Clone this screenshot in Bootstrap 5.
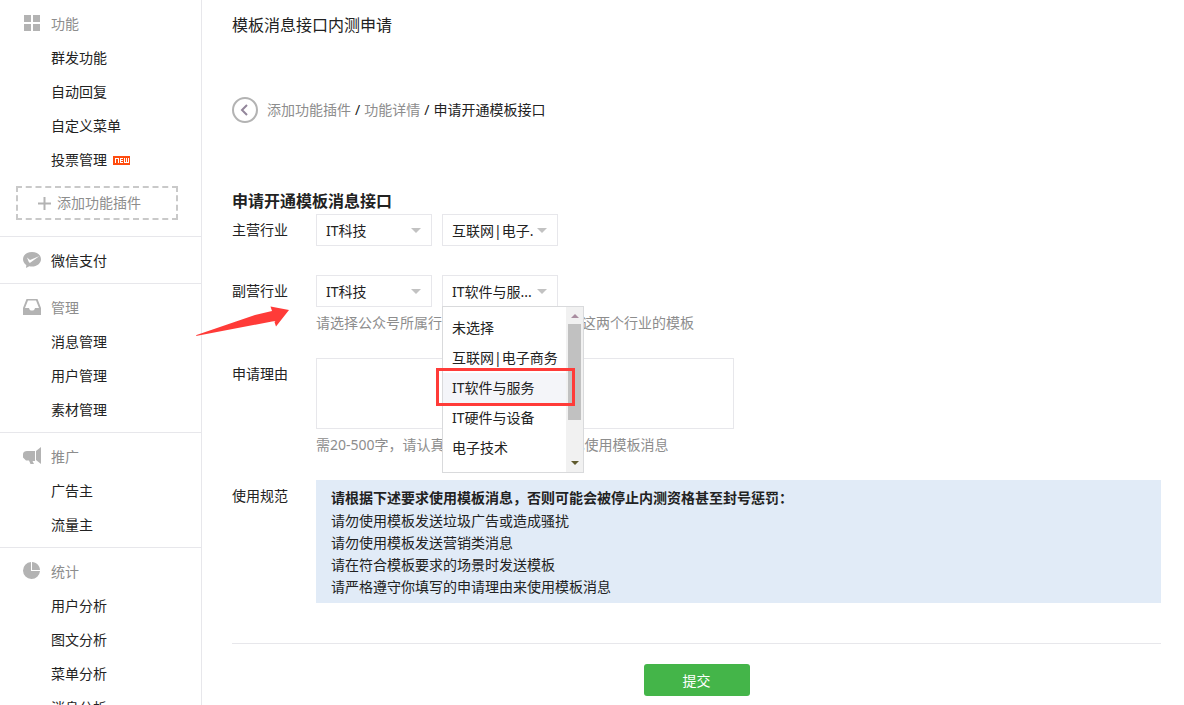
<!DOCTYPE html>
<html lang="zh-CN">
<head>
<meta charset="utf-8">
<meta name="viewport" content="width=device-width, initial-scale=1">
<title>模板消息接口内测申请</title>
<link href="https://cdn.jsdelivr.net/npm/bootstrap@5.3.0/dist/css/bootstrap.min.css" rel="stylesheet">
<style>
body{font-family:"Noto Sans","Noto Sans CJK SC",sans-serif;font-size:14px;line-height:22px;color:#222;background:#fff}
a{color:inherit;text-decoration:none}
.side{width:202px;border-right:1px solid #e7e7eb}
.side-group{padding:7px 0 5px;border-bottom:1px solid #e7e7eb}
.side-group:last-child{border-bottom:0}
.side-row{height:34px;padding-left:51px;display:flex;align-items:center;position:relative}
.side-row svg{position:absolute;left:23px;top:7px}
.muted{color:#8d8d8d}
.new-tag{margin-left:6px;width:17px;height:9px;background:#ff4c0f}
.add-plugin{margin:9px 23px 11px 16px;height:34px;border:2px dashed #c9c9c9;padding-left:20px;gap:6px}
.content-area{padding:9px 23px 9px 30px}
.page-title{font-size:16px;line-height:32px;font-weight:400}
.crumbs{margin-top:56px;gap:9px;height:26px}
.section-title{font-size:16px;line-height:26px;font-weight:700;margin-top:65px}
.field-label{width:84px;line-height:32px}
.form-line{margin-bottom:24px}
.pick-line{margin-bottom:29px}
.picks{gap:10px}
.pick{width:116px;height:32px;border:1px solid #e7e7eb;border-radius:0;padding:2px 20px 0 9px;font-size:14px;line-height:22px;color:#222;box-shadow:none;
background-image:url("data:image/svg+xml,%3Csvg xmlns='http://www.w3.org/2000/svg' viewBox='0 0 10 5'%3E%3Cpath d='M0 0h10L5 5z' fill='%23c2c2c2'/%3E%3C/svg%3E");background-size:10px 5px;background-position:right 10px center}
.hint{margin-top:5px;color:#8d8d8d}
.reason{width:418px;max-width:100%;height:71px;border:1px solid #e7e7eb;border-radius:0;resize:none}
.options{position:absolute;left:0;top:31px;width:142px;height:167px;border:1px solid #d9dadc;background:#fff;z-index:5}
.options ul{padding-top:6px}
.options li{height:30px;padding-left:9px;line-height:30px;white-space:nowrap;position:relative}
.options .chosen{background:#f4f5f9}
.options .chosen::after{content:"";position:absolute;inset:-5px -9px -3px -7px;border:3px solid #ff3b38}
.scroll-track{width:17px;background:#f1f1f1;padding:7px 0}
.scroll-thumb{width:13px;height:96px;background:#c1c1c1;margin:6px 0 auto}
.pointer{position:absolute;left:-36px;top:31px}
.rules{background:#e1ebf7;padding:7px 15px 5px}
.rules strong{margin-bottom:1px}
.divide{border-top:1px solid #e7e7eb;margin-top:40px;padding-top:20px}
.submit{width:106px;height:32px;padding:2px 0 0;font-size:14px;line-height:22px;color:#fff;background:#44b549;border:0;border-radius:3px}
.submit:hover{background:#2f9833;color:#fff}
</style>
</head>
<body>
<div class="d-flex min-vh-100">
<nav class="side flex-shrink-0">
  <div class="side-group">
    <div class="side-row muted"><svg width="18" height="18" fill="#b3b3b3"><path d="M1 1h7v7H1zM10 1h7v7h-7zM1 10h7v7H1zM10 10h7v7h-7z"/></svg>功能</div>
    <a class="side-row" href="#">群发功能</a>
    <a class="side-row" href="#">自动回复</a>
    <a class="side-row" href="#">自定义菜单</a>
    <a class="side-row" href="#">投票管理<span class="new-tag d-block"><svg class="position-static d-block" width="17" height="9" fill="#fff" shape-rendering="crispEdges"><path d="M2 2h4v5H5V3H3v4H2zM7 2h3v1H8v1h2v1H8v1h2v1H7zM11 2h1v4h1V2h1v4h1V2h1v5h-5z"/></svg></span></a>
    <a class="add-plugin d-flex align-items-center muted" href="#"><svg width="13" height="13" fill="#b3b3b3"><path d="M5.500 0h2v5.500H13v2H7.500V13h-2V7.500H0v-2h5.500z"/></svg>添加功能插件</a>
  </div>
  <div class="side-group">
    <a class="side-row" href="#"><svg width="18" height="18"><path d="M9 1C4 1 0 4 0 8.200c0 2.500 1.400 4.500 3.300 5.800L3 17l3.300-1.800c.9.200 1.800.3 2.700.3 5 0 9-3.200 9-7.300S14 1 9 1z" fill="#b3b3b3"/><path d="M4 6.500l3 2.500L16.500 5l-9 6.500c-1 .5-1.500 0-1.800-.7z" fill="#fff"/></svg>微信支付</a>
  </div>
  <div class="side-group">
    <div class="side-row muted"><svg width="18" height="18"><path d="M3.500 1h11L18 10v7H0v-7zM5 2.500L2 10h4c.5 2 1.200 2.500 3 2.500s2.500-.5 3-2.500h4l-3-7.500z" fill="#b3b3b3" fill-rule="evenodd"/></svg>管理</div>
    <a class="side-row" href="#">消息管理</a>
    <a class="side-row" href="#">用户管理</a>
    <a class="side-row" href="#">素材管理</a>
  </div>
  <div class="side-group">
    <div class="side-row muted"><svg width="18" height="18" fill="#b3b3b3"><path d="M4 4h8v10H9.500l1.500 3H7.500L6 13.500H3L0 10.500V7c0-2 2-3 4-3zM13 4l5-4v17l-5-4z"/></svg>推广</div>
    <a class="side-row" href="#">广告主</a>
    <a class="side-row" href="#">流量主</a>
  </div>
  <div class="side-group">
    <div class="side-row muted"><svg width="18" height="18" fill="#b3b3b3"><path d="M8 0a8.500 8.500 0 1 0 9 9H8zM9 0v8h8C17 4 13.500 0 9 0z"/></svg>统计</div>
    <a class="side-row" href="#">用户分析</a>
    <a class="side-row" href="#">图文分析</a>
    <a class="side-row" href="#">菜单分析</a>
    <a class="side-row" href="#">消息分析</a>
  </div>
</nav>
<main class="content-area flex-grow-1">
  <h1 class="page-title mb-0">模板消息接口内测申请</h1>
  <div class="crumbs d-flex align-items-center">
    <a href="#" aria-label="返回" class="d-flex"><svg width="26" height="26" fill="none"><circle cx="13" cy="13" r="12" stroke="#b3b3b3" stroke-width="2"/><path d="M15 8l-5 5 5 5" stroke="#93869b" stroke-width="2"/></svg></a>
    <div class="d-flex gap-1"><a class="muted" href="#">添加功能插件</a><span>/</span><a class="muted" href="#">功能详情</a><span>/</span><span>申请开通模板接口</span></div>
  </div>
  <h2 class="section-title mb-0">申请开通模板消息接口</h2>
  <form onsubmit="return false">
    <div class="pick-line d-flex">
      <label class="field-label flex-shrink-0" for="main1">主营行业</label>
      <div class="d-flex picks">
        <select id="main1" class="form-select pick"><option>IT科技</option></select>
        <select class="form-select pick" aria-label="主营行业细分"><option>互联网|电子.</option></select>
      </div>
    </div>
    <div class="form-line d-flex position-relative">
      <label class="field-label flex-shrink-0" for="sub1">副营行业</label>
      <div>
        <div class="d-flex picks">
          <select id="sub1" class="form-select pick"><option>IT科技</option></select>
          <div class="position-relative">
            <select class="form-select pick" aria-label="副营行业细分"><option>IT软件与服...</option></select>
            <div class="options d-flex">
              <ul class="list-unstyled mb-0 flex-grow-1">
                <li>未选择</li><li>互联网|电子商务</li><li class="chosen">IT软件与服务</li><li>IT硬件与设备</li><li>电子技术</li>
              </ul>
              <div class="scroll-track d-flex flex-column align-items-center">
                <svg width="8" height="4"><path d="M0 4h8L4 0z" fill="#a98da0"/></svg>
                <div class="scroll-thumb"></div>
                <svg width="8" height="4"><path d="M0 0h8L4 4z" fill="#5f5a2d"/></svg>
              </div>
            </div>
          </div>
        </div>
        <div class="hint">请选择公众号所属行业，通过后你可以使用这两个行业的模板</div>
      </div>
      <svg class="pointer" width="94" height="32" viewBox="196 306 94 32"><path d="M289 310l-18.500-3.500 1.500 4.500-17 4-58.500 20-.5 1 76-14.500 3.500-.5-1 1 1.500 4.500z" fill="#ff3b38"/></svg>
    </div>
    <div class="form-line d-flex">
      <label class="field-label flex-shrink-0" for="reason">申请理由</label>
      <div>
        <textarea id="reason" class="form-control reason"></textarea>
        <div class="hint">需20-500字，请认真填写，通过后你将据此使用模板消息</div>
      </div>
    </div>
    <div class="form-line d-flex">
      <div class="field-label flex-shrink-0">使用规范</div>
      <div class="rules flex-grow-1">
        <strong class="d-block">请根据下述要求使用模板消息，否则可能会被停止内测资格甚至封号惩罚：</strong>
        <div>请勿使用模板发送垃圾广告或造成骚扰</div>
        <div>请勿使用模板发送营销类消息</div>
        <div>请在符合模板要求的场景时发送模板</div>
        <div>请严格遵守你填写的申请理由来使用模板消息</div>
      </div>
    </div>
    <div class="divide text-center"><button class="btn submit" type="submit">提交</button></div>
  </form>
</main>
</div>
<script src="https://cdn.jsdelivr.net/npm/bootstrap@5.3.0/dist/js/bootstrap.bundle.min.js"></script>
</body>
</html>
